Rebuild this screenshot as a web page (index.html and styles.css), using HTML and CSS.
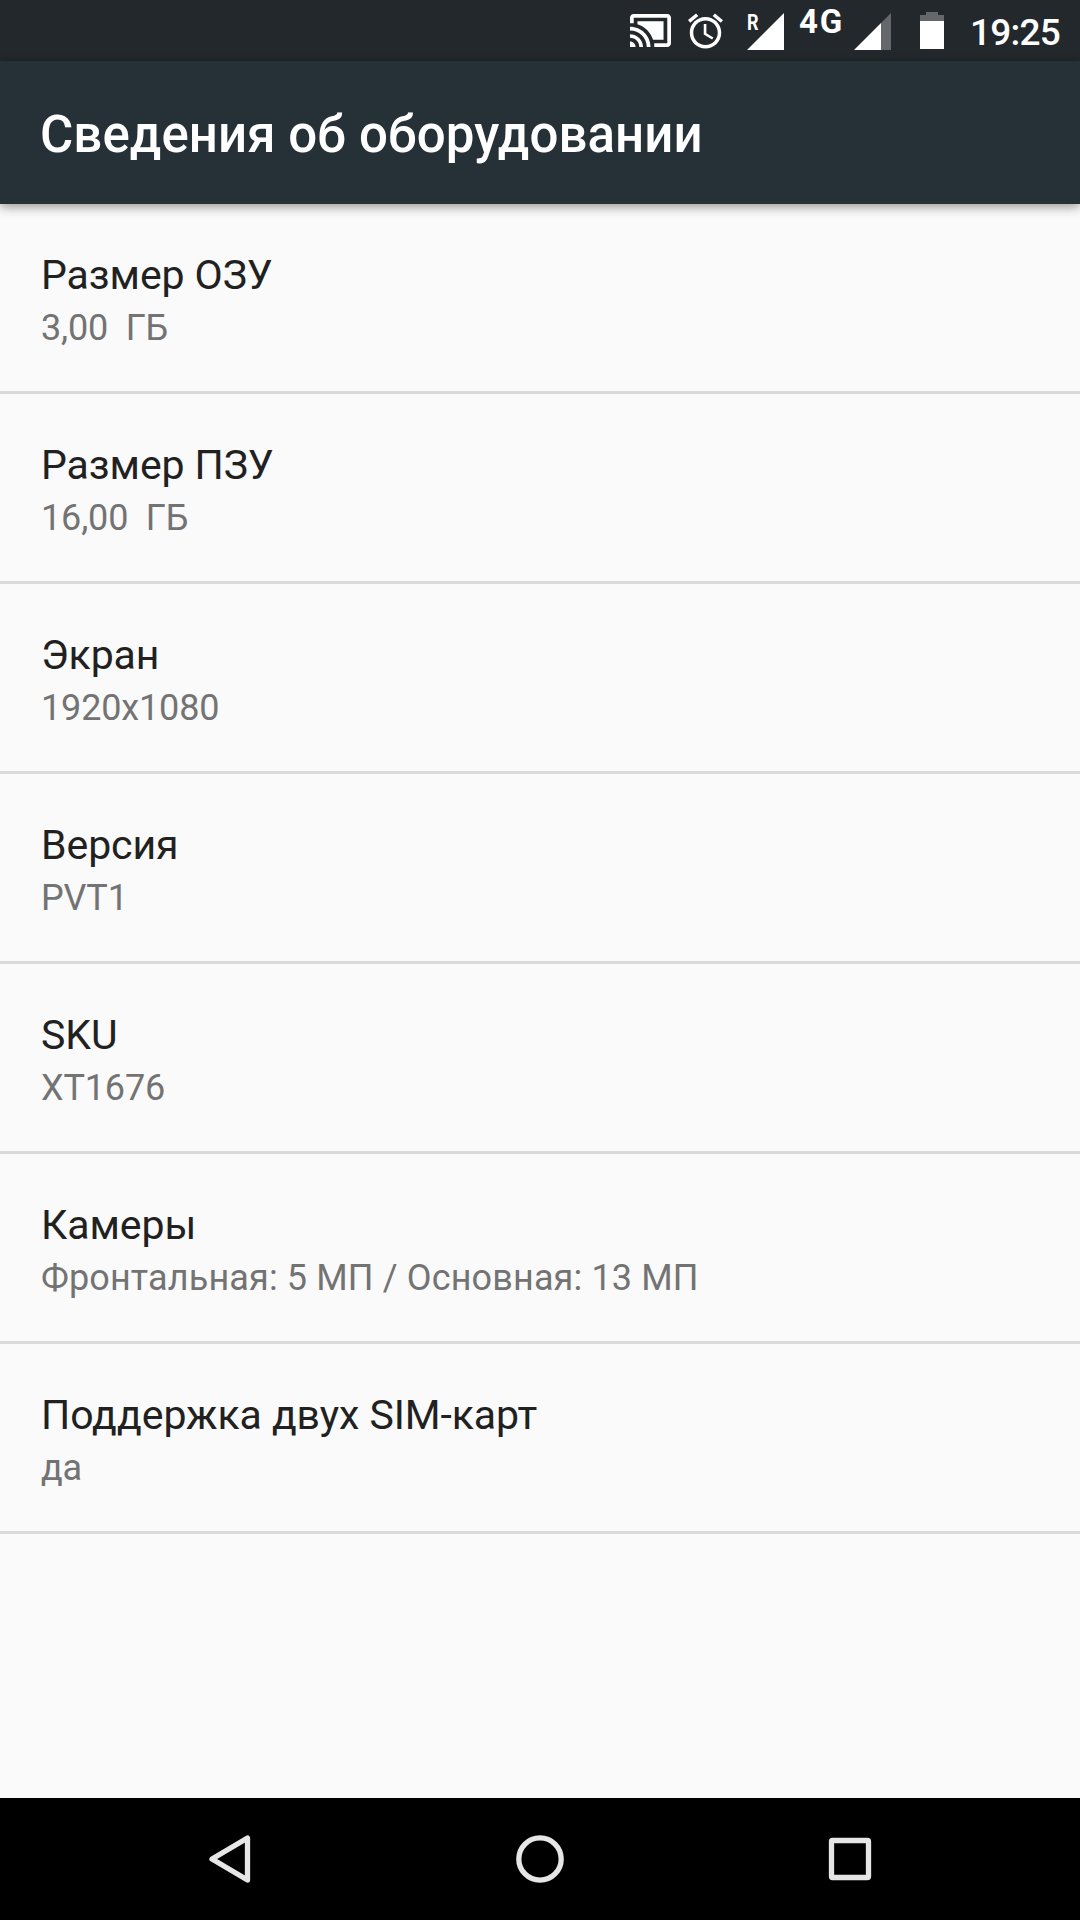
FILE: index.html
```html
<!DOCTYPE html>
<html lang="ru">

<head>
  <meta charset="UTF-8">
  <meta name="viewport" content="width=device-width, initial-scale=1.0">
  <title>Сведения об оборудовании</title>
  <link rel="stylesheet" href="styles.css">
</head>
<body>
  <div class="status-bar">
    <svg class="icon cast" viewBox="1 3 22 18" preserveAspectRatio="none">
      <path d="M1 18v3h3c0-1.66-1.34-3-3-3zm0-4v2c2.76 0 5 2.24 5 5h2c0-3.87-3.13-7-7-7zm18-7H5v1.63c3.96 1.28 7.09 4.41 8.37 8.37H19V7zM1 10v2c4.97 0 9 4.03 9 9h2c0-6.08-4.93-11-11-11zm20-7H3c-1.1 0-2 .9-2 2v3h2V5h18v14h-7v2h7c1.1 0 2-.9 2-2V5c0-1.1-.9-2-2-2z"/>
    </svg>
    <svg class="icon alarm" viewBox="2 1.86 20 20.14">
      <path d="M22 5.72l-4.6-3.86-1.29 1.53 4.6 3.86L22 5.72zM7.88 3.39L6.6 1.86 2 5.71l1.29 1.53 4.59-3.85zM12.5 8H11v6l4.75 2.85.75-1.23-4-2.37V8zM12 4c-4.97 0-9 4.03-9 9s4.02 9 9 9c4.97 0 9-4.03 9-9s-4.03-9-9-9zm0 16c-3.87 0-7-3.13-7-7s3.13-7 7-7 7 3.13 7 7-3.13 7-7 7z"/>
    </svg>
    <div class="signal roaming">
      <svg class="icon" viewBox="0 0 37 37"><path d="M37 0v37H0z"/></svg>
      <span class="roaming-label">R</span>
    </div>
    <span class="network">4G</span>
    <div class="signal">
      <svg class="icon" viewBox="0 0 37 37">
        <path class="dim" d="M37 0v37H27V10z"/>
        <path d="M27 10v27H0z"/>
      </svg>
    </div>
    <svg class="icon battery" viewBox="0 0 24 37">
      <path class="dim" d="M6 0h12v3h6v6H0V3h6z"/>
      <path d="M0 9h24v28H0z"/>
    </svg>
    <span class="clock">19:25</span>
  </div>

  <header class="app-bar">
    <h1>Сведения об оборудовании</h1>
  </header>

  <main class="list">
    <div class="item">
      <div class="name">Размер ОЗУ</div>
      <div class="value">3,00&nbsp; ГБ</div>
    </div>
    <div class="item">
      <div class="name">Размер ПЗУ</div>
      <div class="value">16,00&nbsp; ГБ</div>
    </div>
    <div class="item">
      <div class="name">Экран</div>
      <div class="value">1920x1080</div>
    </div>
    <div class="item">
      <div class="name">Версия</div>
      <div class="value">PVT1</div>
    </div>
    <div class="item">
      <div class="name">SKU</div>
      <div class="value">XT1676</div>
    </div>
    <div class="item">
      <div class="name">Камеры</div>
      <div class="value cameras">Фронтальная: 5 МП / Основная: 13 МП</div>
    </div>
    <div class="item">
      <div class="name">Поддержка двух SIM-карт</div>
      <div class="value">да</div>
    </div>
  </main>

  <nav class="nav-bar">
    <svg class="nav-icon" viewBox="0 0 60 60">
      <path d="M47.5 9v42L12 30z"/>
    </svg>
    <svg class="nav-icon" viewBox="0 0 60 60">
      <circle cx="30" cy="30" r="21.2"/>
    </svg>
    <svg class="nav-icon" viewBox="0 0 60 60">
      <rect x="11.5" y="11.5" width="37" height="37" rx="1"/>
    </svg>
  </nav>
</body>
</html>
```
FILE: styles.css
```css
* {
  box-sizing: border-box;
}

body {
  margin: 0;
  height: 1920px;
  display: flex;
  flex-direction: column;
  background: #fafafa;
  font-family: Roboto, sans-serif;
  overflow: hidden;
}

/* status bar */
.status-bar {
  height: 61px;
  display: flex;
  align-items: flex-start;
  justify-content: flex-end;
  padding-right: 19px;
  background: #22282b;
  color: #fff;
}

.icon {
  display: block;
  fill: #fff;
}

.dim {
  fill: #64686a;
}

.cast {
  width: 41px;
  height: 33px;
  margin: 14px 17px 0 0;
}

.alarm {
  width: 35px;
  height: 36px;
  margin: 13px 24px 0 0;
}

.signal {
  position: relative;
  width: 37px;
  height: 37px;
  margin: 13px 29px 0 0;
}

.signal.roaming {
  margin-right: 15px;
}

.roaming-label {
  position: absolute;
  left: 0;
  top: 1px;
  font-size: 22px;
  line-height: 17px;
  font-weight: 700;
  transform: scaleX(0.82);
  transform-origin: left;
}

.network {
  width: 55px;
  margin-top: 6px;
  font-size: 33px;
  line-height: 32px;
  font-weight: 700;
  letter-spacing: 1.8px;
}

.battery {
  width: 24px;
  height: 37px;
  margin: 12px 26px 0 0;
}

.clock {
  width: 91px;
  margin-top: 11px;
  font-size: 37px;
  line-height: 44px;
  font-weight: 500;
  letter-spacing: -0.8px;
}

/* title */
.app-bar {
  height: 143px;
  display: flex;
  align-items: center;
  padding: 5px 40px 0;
  background: #263137;
  box-shadow: 0 3px 10px rgba(0, 0, 0, 0.4);
}

h1 {
  margin: 0;
  color: #fff;
  font-size: 51px;
  line-height: 60px;
  font-weight: 500;
  letter-spacing: 0.08px;
}

/* list */
.list {
  flex: 1;
}

.item {
  height: 190px;
  padding: 47px 41px 0;
  border-bottom: 3px solid #dadada;
}

.name {
  color: #212121;
  font-size: 41px;
  line-height: 48px;
  letter-spacing: -0.07px;
}

.value {
  margin-top: 8px;
  color: #737373;
  font-size: 36px;
  line-height: 42px;
  letter-spacing: -0.15px;
}

.value.cameras {
  letter-spacing: 0.14px;
}

/* bottom buttons */
.nav-bar {
  height: 122px;
  display: flex;
  align-items: center;
  justify-content: center;
  gap: 250px;
  background: #000;
}

.nav-icon {
  width: 60px;
  height: 60px;
  fill: none;
  stroke: #e6e6e6;
  stroke-width: 5.3;
  stroke-linejoin: round;
}
```
